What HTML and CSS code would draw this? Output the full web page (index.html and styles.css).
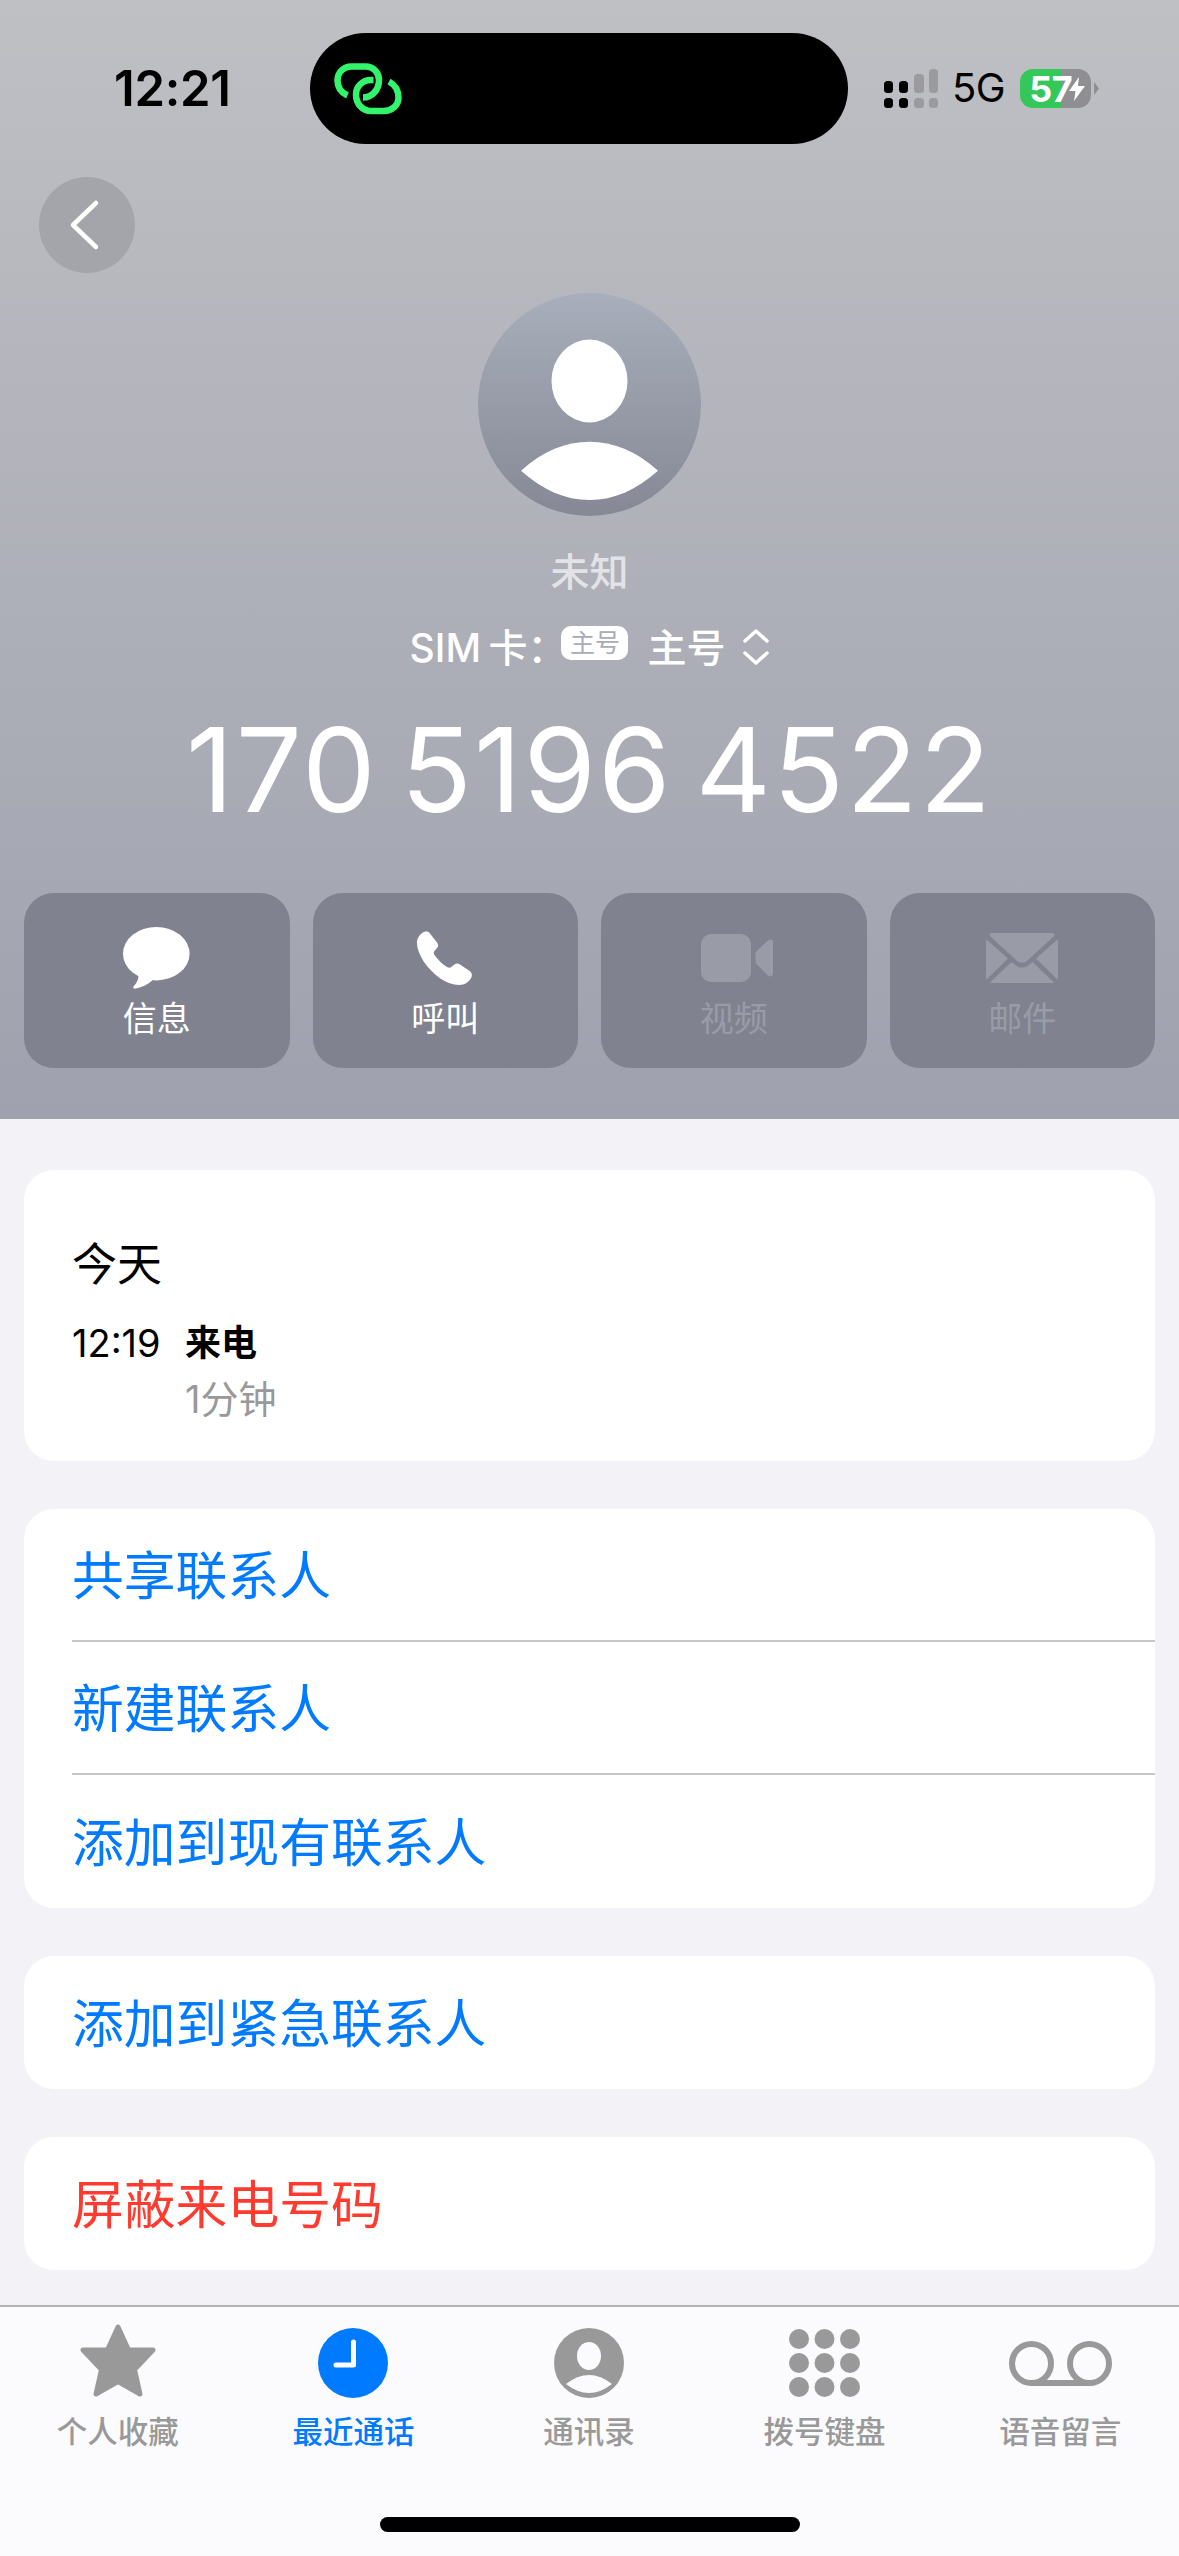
FILE: index.html
```html
<!DOCTYPE html>
<html lang="zh-CN">
<head>
  <meta charset="UTF-8">
  <meta name="viewport" content="width=device-width, initial-scale=1.0">
  <title>未知</title>
  <link rel="stylesheet" href="styles.css">
</head>
<body>

  <!-- Contact header -->
  <header class="contact-header">
    <div class="status-bar">
      <span class="status-time">12:21</span>
      <div class="island">
        <svg class="island-link" viewBox="0 0 68 52" width="68" height="52" fill="none" stroke="#33f56c" stroke-width="6.5">
          <path d="M13.5 32.5C7 29.5 3.500 24 3.500 17.500 3.500 9.500 9.500 3.500 17.500 3.500H31.500C39.500 3.500 45 9.500 45 17 45 27 38 34.500 29 34.500"/>
          <path d="M39.500 17H37C28.500 17 22 23.500 22 31.500 22 41 28.500 48 37 48H50C58 48 64.500 42 64.500 35 64.500 27.500 60.500 21.500 55 18.500"/>
        </svg>
      </div>
      <div class="status-right">
        <svg class="signal" viewBox="0 0 54 39" width="54" height="39">
          <rect x="0" y="12" width="9" height="12" rx="3.500" fill="#000"/>
          <rect x="15" y="12" width="9" height="12" rx="3.500" fill="#000"/>
          <rect x="30" y="5" width="10" height="19" rx="3.500" fill="#9b9b9f"/>
          <rect x="45" y="0" width="9" height="24" rx="3.500" fill="#9b9b9f"/>
          <rect x="0" y="29" width="9" height="10" rx="3.500" fill="#000"/>
          <rect x="15" y="29" width="9" height="10" rx="3.500" fill="#000"/>
          <rect x="30" y="29" width="10" height="10" rx="3.500" fill="#9b9b9f"/>
          <rect x="45" y="29" width="9" height="10" rx="3.500" fill="#9b9b9f"/>
        </svg>
        <span class="network">5G</span>
        <div class="battery">
          <span class="battery-level">57</span>
          <svg viewBox="0 0 16 24" width="16" height="24"><path d="M10 0 0 14H6.500L5 24 16 9H9Z" fill="#fff"/></svg>
        </div>
        <svg class="battery-cap" viewBox="0 0 5 13" width="5" height="13"><path d="M0 0 5 6.500 0 13Z" fill="#8e8e93"/></svg>
      </div>
    </div>

    <button class="back-button">
      <svg viewBox="0 0 96 96" width="96" height="96" fill="none" stroke="#fff" stroke-width="4.500" stroke-linecap="round" stroke-linejoin="round">
        <path d="M57 26 34 48 57 70"/>
      </svg>
    </button>

    <svg class="avatar" viewBox="0 0 223 223" width="223" height="223">
      <defs>
        <linearGradient id="avatarFill" x1="0" y1="0" x2="0" y2="1">
          <stop offset="0" stop-color="#a8aebb"/>
          <stop offset="1" stop-color="#868995"/>
        </linearGradient>
      </defs>
      <circle cx="111.500" cy="111.500" r="111.500" fill="url(#avatarFill)"/>
      <ellipse cx="111.500" cy="88" rx="38" ry="41.500" fill="#fff"/>
      <path d="M43 177.700C65 158 88 148.800 111.500 148.800S158 158 180 177.700C158 197 136 207 111.500 207S65 197 43 177.700Z" fill="#fff"/>
    </svg>

    <div class="contact-name">未知</div>

    <div class="sim-row">
      <span class="sim-label">SIM 卡：</span>
      <span class="sim-badge">主号</span>
      <span class="sim-name">主号</span>
      <svg viewBox="0 0 26 36" width="26" height="36" fill="none" stroke="#fff" stroke-width="3.500" stroke-linecap="round" stroke-linejoin="round">
        <path d="M2 12 13 2 24 12M2 24 13 34 24 24"/>
      </svg>
    </div>

    <div class="phone-number">170 5196 4522</div>

    <div class="actions">
      <button class="action">
        <span class="action-icon">
          <svg viewBox="0 0 67 62" width="67" height="62" fill="#fff">
            <ellipse cx="33.300" cy="26.700" rx="33.300" ry="26.700"/>
            <path d="M15 44C17 50 14 56 10.500 59.500 9.500 61 11 62 13 61.500 19 60.500 25 57.500 31 52Z"/>
          </svg>
        </span>
        <span class="action-label">信息</span>
      </button>
      <button class="action">
        <span class="action-icon icon-phone">
          <svg viewBox="0 0 55 54" width="55" height="54" fill="#fff">
            <path d="M7 1C9.500 0 11.500 .5 13 2.500L20 11.500C21.500 13.500 21.500 15.500 20 17L17.500 20C16.500 21 16.500 22.500 17.500 24 20.500 28.500 25 33 30 36 31.500 37 33 37 34.200 36L37.500 33.500C39 32.300 41 32.300 43 33.500L52 39.500C54.500 41 55.500 43.500 54.500 46 52.500 50.500 48 54 42 54 30 54 16 44 7 31 2 23 0 17 0 11.500 0 7 3 3 7 1Z"/>
          </svg>
        </span>
        <span class="action-label">呼叫</span>
      </button>
      <button class="action is-disabled">
        <span class="action-icon icon-video">
          <svg viewBox="0 0 72 48" width="72" height="48" fill="#999ba7">
            <rect width="50" height="48" rx="10"/>
            <path d="M54.500 18 67 6.500C69 4.500 72 5.500 72 8.500V39.500C72 42.500 69 43.500 67 41.500L54.500 29Z"/>
          </svg>
        </span>
        <span class="action-label">视频</span>
      </button>
      <button class="action is-disabled">
        <span class="action-icon">
          <svg viewBox="0 0 72 50" width="72" height="50" fill="#999ba7">
            <path d="M6 0H66C68.500 0 69 2 67.500 3.500L41.500 27.500C38 30.500 34 30.500 30.500 27.500L4.500 3.500C3 2 3.500 0 6 0Z"/>
            <path d="M.5 6.500 22 25.500 .5 46.500C.2 46 0 45 0 44V8C0 7.500 .2 7 .5 6.500Z"/>
            <path d="M71.500 6.500 50 25.500 71.500 46.500C71.800 46 72 45 72 44V8C72 7.500 71.800 7 71.500 6.500Z"/>
            <path d="M4 49.500 25.500 29 28.500 31.500C33 35.500 39 35.500 43.500 31.500L46.500 29 68 49.500C67.500 49.800 67 50 66 50H6C5 50 4.500 49.800 4 49.500Z"/>
          </svg>
        </span>
        <span class="action-label">邮件</span>
      </button>
    </div>
  </header>

  <!-- Call details and contact actions -->
  <main class="content">
    <section class="card history">
      <div class="history-day">今天</div>
      <div class="history-row">
        <span class="history-time">12:19</span>
        <span class="history-type">来电</span>
        <span class="history-length">1分钟</span>
      </div>
    </section>

    <section class="card">
      <a class="row">共享联系人</a>
      <a class="row">新建联系人</a>
      <a class="row">添加到现有联系人</a>
    </section>

    <section class="card">
      <a class="row">添加到紧急联系人</a>
    </section>

    <section class="card">
      <a class="row danger">屏蔽来电号码</a>
    </section>
  </main>

  <!-- Tab bar -->
  <nav class="tab-bar">
    <div class="tabs">
      <div class="tab">
        <svg viewBox="0 0 78 74" width="78" height="74">
          <path d="M39 3 49.500 26H74L55.500 45.500 61 70 39 57.500 17 70 22.500 45.500 4 26H28.500Z" fill="#999" stroke="#999" stroke-width="5" stroke-linejoin="round"/>
        </svg>
        <span>个人收藏</span>
      </div>
      <div class="tab is-active">
        <svg viewBox="0 0 70 74" width="70" height="74">
          <circle cx="35" cy="39" r="35" fill="#007aff"/>
          <path d="M35.500 18V41H18" fill="none" stroke="#fff" stroke-width="5" stroke-linecap="round" stroke-linejoin="round"/>
        </svg>
        <span>最近通话</span>
      </div>
      <div class="tab">
        <svg viewBox="0 0 70 74" width="70" height="74">
          <circle cx="35" cy="39" r="35" fill="#999"/>
          <ellipse cx="35" cy="32" rx="12" ry="14" fill="#fbfbfd"/>
          <path d="M12 60Q35 42 58 60 35 78 12 60Z" fill="#fbfbfd"/>
        </svg>
        <span>通讯录</span>
      </div>
      <div class="tab">
        <svg viewBox="0 0 72 74" width="72" height="74" fill="#999">
          <circle cx="10" cy="15" r="10"/><circle cx="35.500" cy="15" r="10"/><circle cx="61" cy="15" r="10"/>
          <circle cx="10" cy="39" r="10"/><circle cx="35.500" cy="39" r="10"/><circle cx="61" cy="39" r="10"/>
          <circle cx="10" cy="63" r="10"/><circle cx="35.500" cy="63" r="10"/><circle cx="61" cy="63" r="10"/>
        </svg>
        <span>拨号键盘</span>
      </div>
      <div class="tab">
        <svg viewBox="0 0 103 74" width="103" height="74" fill="none" stroke="#999" stroke-width="6">
          <circle cx="22.500" cy="39.500" r="19.500"/>
          <circle cx="80.500" cy="39.500" r="19.500"/>
          <path d="M22.500 59H80.500"/>
        </svg>
        <span>语音留言</span>
      </div>
    </div>
    <div class="home-indicator"></div>
  </nav>

</body>
</html>
```

FILE: styles.css
```css
/* Reset & base */
* { margin: 0; padding: 0; box-sizing: border-box; }
html, body { height: 100%; }
body {
  display: flex;
  flex-direction: column;
  height: 2556px;
  overflow: hidden;
  background: #f2f2f7;
  color: #000;
  font-family: Inter, "Noto Sans CJK SC", sans-serif;
}
svg { display: block; }
button { border: none; background: none; font: inherit; color: inherit; }

/* Header */
.contact-header {
  display: flex;
  flex-direction: column;
  height: 1119px;
  background: linear-gradient(to bottom, #bfc0c4, #9fa1ae);
  color: #fff;
}

/* Status bar */
.status-bar {
  display: flex;
  align-items: center;
  height: 144px;
  padding-top: 33px;
  color: #000;
}
.status-time {
  width: 310px;
  padding-left: 114px;
  font-size: 49px;
  font-weight: 600;
  letter-spacing: -.3px;
}
.island {
  display: flex;
  align-items: center;
  width: 538px;
  height: 111px;
  padding-left: 24px;
  border-radius: 56px;
  background: #000;
}
.status-right {
  display: flex;
  align-items: center;
  padding-left: 36px;
}
.network {
  margin: 0 0 2px 14px;
  font-size: 40px;
  letter-spacing: -.5px;
}
.battery {
  display: flex;
  align-items: center;
  width: 71px;
  height: 39px;
  margin-left: 15px;
  padding-left: 9px;
  border-radius: 13px;
  background: linear-gradient(to right, #34c759 58%, #8e8e93 58%);
  color: #fff;
}
.battery-level {
  width: 40px;
  font-size: 36px;
  font-weight: 700;
  letter-spacing: -.5px;
}
.battery-cap { margin-left: 3px; }

/* Back button */
.back-button {
  width: 96px;
  height: 96px;
  margin: 33px 0 0 39px;
  border-radius: 50%;
  background: #a4a5aa;
}

/* Contact summary */
.avatar { margin: 20px auto 0; }
.contact-name {
  margin-top: 31px;
  font-size: 39px;
  font-weight: 500;
  line-height: 50px;
  text-align: center;
  color: #e2e3e6;
}
.sim-row {
  display: flex;
  justify-content: center;
  align-items: center;
  height: 50px;
  margin-top: 23px;
  font-size: 39px;
  font-weight: 500;
}
.sim-row svg { margin-top: 3px; }
.sim-label { word-spacing: -3px; }
.sim-badge {
  width: 67px;
  height: 34px;
  margin: 0 0 4px -5px;
  border-radius: 10px;
  background: #fff;
  color: #a9abb6;
  font-size: 25px;
  font-weight: 400;
  line-height: 34px;
  text-align: center;
}
.sim-name { margin: 0 18px 0 19px; }
.phone-number {
  margin-top: 35px;
  font-size: 117px;
  font-weight: 400;
  letter-spacing: 2px;
  word-spacing: -12px;
  line-height: 130px;
  text-align: center;
}

/* Action buttons */
.actions {
  display: flex;
  gap: 23px;
  margin-top: 58px;
  padding: 0 24px;
}
.action {
  display: flex;
  flex: 1;
  flex-direction: column;
  align-items: center;
  height: 175px;
  padding-top: 32px;
  border-radius: 30px;
  background: #80828f;
}
.action-icon {
  display: flex;
  align-items: center;
  height: 66px;
}
.icon-phone { margin-right: 2px; }
.icon-video { margin-left: 6px; }
.action-label {
  margin-top: 8px;
  font-size: 34px;
  line-height: 40px;
}
.action.is-disabled .action-label { color: #999ba7; }

/* Cards */
.content {
  display: flex;
  flex-direction: column;
  gap: 48px;
  padding: 51px 24px 0;
}
.card {
  border-radius: 30px;
  background: #fff;
}
.history {
  height: 291px;
  padding: 65px 48px 0;
}
.history-day {
  font-size: 45px;
  line-height: 60px;
}
.history-row {
  display: grid;
  grid-template-columns: 113px 1fr;
  row-gap: 6px;
  margin-top: 23px;
  line-height: 50px;
}
.history-time { font-size: 38px; }
.history-type {
  font-size: 36px;
  font-weight: 600;
}
.history-length {
  grid-column: 2;
  font-size: 38px;
  color: #999;
}
.row {
  display: flex;
  align-items: center;
  height: 133px;
  margin-left: 48px;
  padding-bottom: 5px;
  font-size: 51.8px;
  color: #007aff;
  border-bottom: 2px solid #c6c6c8;
}
.row:last-child { border-bottom: none; }
.row.danger { color: #ff3b30; }

/* Tab bar */
.tab-bar {
  flex: 1;
  margin-top: 35px;
  border-top: 2px solid #b2b2b4;
  background: #fbfbfd;
}
.tabs {
  display: flex;
  padding: 17px 1px 0 0;
}
.tab {
  display: flex;
  flex: 1;
  flex-direction: column;
  align-items: center;
  color: #999;
}
.tab span {
  margin-top: 14px;
  font-size: 30.5px;
  font-weight: 500;
  line-height: 40px;
}
.tab.is-active { color: #007aff; }
.home-indicator {
  width: 420px;
  height: 15px;
  margin: 65px auto 0;
  border-radius: 8px;
  background: #000;
}
```
